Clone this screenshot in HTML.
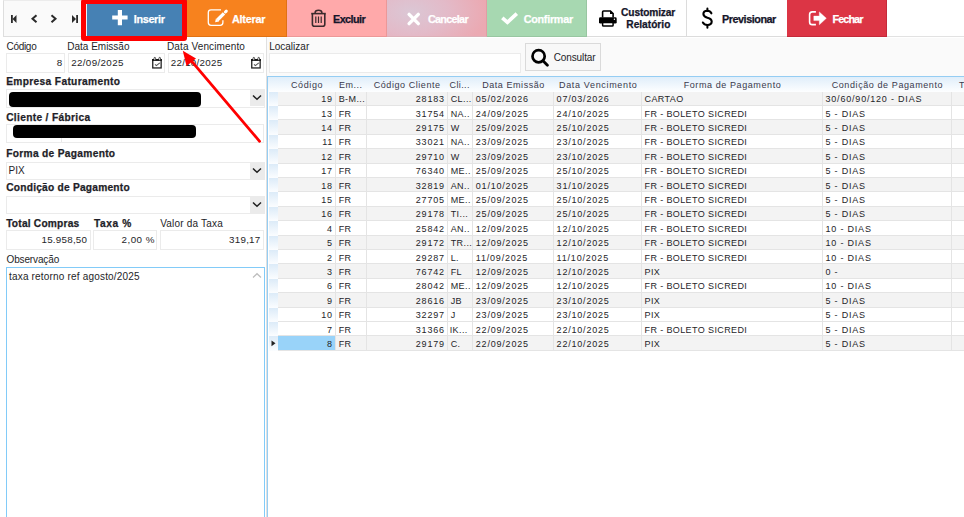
<!DOCTYPE html>
<html><head><meta charset="utf-8">
<style>
*{box-sizing:border-box;margin:0;padding:0}
html,body{width:964px;height:517px;overflow:hidden;background:#fff}
body{position:relative;font-family:"Liberation Sans",sans-serif;font-size:10px;color:#1e1e28}
.a{position:absolute}
.x{position:absolute;white-space:nowrap;line-height:20px}
.inp{position:absolute;background:#fff;border:1px solid #ebebeb}
.btn{position:absolute;top:0;height:37px}
.gl{position:absolute;background:#e4e4e4}
</style></head><body>
<div class="a" style="left:3px;top:0;width:961px;height:37px;background:#fff;border-bottom:1px solid #e2e2e2"></div>
<div class="a" style="left:3px;top:0;width:80px;height:37px;background:#fafafa;border-left:1px solid #dedede;border-bottom:1px solid #dedede;border-top:1px solid #ececec"></div>
<svg class="a" style="left:0;top:0" width="90" height="37">
 <g fill="#2a2a2a">
  <rect x="11" y="15" width="1.8" height="8"/>
  <path d="M16.5 15 L12.5 19 L16.5 23 Z"/>
  <path d="M72 15 L76 19 L72 23 Z"/>
  <rect x="76.2" y="15" width="1.8" height="8"/>
 </g>
 <g fill="none" stroke="#2a2a2a" stroke-width="2">
  <path d="M36.5 15.3 L32.5 18.8 L36.5 22.3"/>
  <path d="M51.5 15.3 L55.5 18.8 L51.5 22.3"/>
 </g>
</svg>
<div class="btn" style="left:86px;width:101px;background:#4681b4;border-left:1px solid #eaf2f8;border-right:1px solid #3d72a0;border-bottom:1px solid #3d72a0"></div>
<svg class="a" style="left:111.8px;top:10px" width="16" height="16"><path d="M5.8 0h4.2v5.6h5.6v4h-5.6v5.6h-4.2v-5.6h-5.6v-4h5.6z" fill="#fff"/></svg>
<div class="btn" style="left:187px;width:100px;background:#f7821e;border-right:1px solid #e07214;border-bottom:1px solid #e07214"></div>
<svg class="a" style="left:200px;top:5px" width="35" height="27">
 <path d="M21 4.9 H11 Q8.3 4.9 8.3 7.6 V17.6 Q8.3 20.3 11 20.3 H20.2 Q22.9 20.3 22.9 17.6 V15.2" fill="none" stroke="#fff" stroke-width="1.3"/>
 <path d="M17.4 15 L24 8.4" stroke="#fff" stroke-width="3.3"/>
 <path d="M15.1 17.2 L15.9 13.4 L19.1 16.5 Z" fill="#fff"/>
 <path d="M25.4 7 L26.3 6.1" stroke="#fff" stroke-width="3" stroke-linecap="round"/>
</svg>
<div class="btn" style="left:287px;width:100px;background:#ffa9aa;border-right:1px solid #ec9898;border-bottom:1px solid #ec9898"></div>
<svg class="a" style="left:305px;top:5px" width="30" height="27" fill="none" stroke="#3a2b2d">
 <path d="M6.2 8.6 H20.8" stroke-width="1.6"/>
 <path d="M10.1 8.4 V7.8 Q10.1 5.3 13.5 5.3 Q16.9 5.3 16.9 7.8 V8.4" stroke-width="1.5"/>
 <path d="M7.4 9 V19.3 Q7.4 21.3 9.4 21.3 H17.8 Q19.8 21.3 19.8 19.3 V9" stroke-width="1.6"/>
 <path d="M10.8 11.6 V17.9 M13.5 11.6 V17.9 M16.2 11.6 V17.9" stroke-width="1.2"/>
</svg>
<div class="btn" style="left:387px;width:100px;background:radial-gradient(ellipse 75px 45px at 24px 12px,#dbc7d5 0%,#e3bac8 50%,#eba9b2 100%) #eba9b1;border-right:1px solid #e09da4;border-bottom:1px solid #dcb0b8"></div>
<svg class="a" style="left:400px;top:5px" width="30" height="27"><path d="M9.1 9.4 L18.3 18.6 M18.3 9.4 L9.1 18.6" stroke="#fff" stroke-width="3.4" stroke-linecap="round"/></svg>
<div class="btn" style="left:487px;width:100px;background:#a7d8b1;border-right:1px solid #98c6a1;border-bottom:1px solid #98c6a1"></div>
<svg class="a" style="left:495px;top:5px" width="30" height="27"><path d="M7.3 12.8 L12.4 17.4 L21.8 8.6" fill="none" stroke="#fff" stroke-width="3.6" stroke-linejoin="miter"/></svg>
<div class="btn" style="left:587px;width:100px;background:#fff;border-right:1px solid #dcdcdc;border-bottom:1px solid #dcdcdc"></div>
<svg class="a" style="left:594px;top:5px" width="30" height="27">
 <path d="M8.6 12.6 V6.9 Q8.6 6 9.5 6 H16.4 L19.1 8.7 V12.6" fill="none" stroke="#000" stroke-width="1.6"/>
 <path d="M16 5.6 L19.5 9.1 H16 Z" fill="#000"/>
 <rect x="5" y="12.3" width="17.7" height="6.3" rx="1.4" fill="#000"/>
 <circle cx="20.4" cy="14.2" r="0.7" fill="#fff"/>
 <rect x="8.6" y="17.6" width="10.5" height="3.5" rx="0.9" fill="#fff" stroke="#000" stroke-width="1.5"/>
</svg>
<div class="btn" style="left:687px;width:100px;background:#fff;border-bottom:1px solid #dcdcdc"></div>
<svg class="a" style="left:695px;top:3px" width="30" height="29"><path d="M12.4 5.4 V8 M12.4 22 V24.8" stroke="#000" stroke-width="2" stroke-linecap="round"/><path d="M16.4 10.3 Q15.2 7.8 12.4 7.8 Q8.4 7.8 8.4 11.1 Q8.4 13.7 12.4 14.7 Q16.7 15.7 16.7 18.6 Q16.7 22 12.4 22 Q9.2 22 7.9 19.5" fill="none" stroke="#000" stroke-width="2.1" stroke-linecap="round"/></svg>
<div class="btn" style="left:787px;width:100px;background:#dc3545;border-right:1px solid #c42a3a;border-bottom:1px solid #c42a3a"></div>
<svg class="a" style="left:800px;top:5px" width="35" height="27">
 <path d="M15.9 6.9 H12.3 Q9.6 6.9 9.6 9.6 V16.9 Q9.6 19.6 12.3 19.6 H15.9" fill="none" stroke="#fff" stroke-width="1.6"/>
 <path d="M13.8 11.1 H19.3 V6.9 L26.3 13.3 L19.3 19.8 V15.6 H13.8 Z" fill="#fff" stroke="#fff" stroke-width="0.4" stroke-linejoin="round"/>
</svg>
<div class="inp" style="left:6px;top:53px;width:59px;height:20px"></div>
<div class="inp" style="left:68px;top:53px;width:97px;height:20px"></div>
<div class="inp" style="left:168px;top:53px;width:96px;height:20px"></div>
<svg class="a" style="left:150px;top:56px" width="14" height="14"><rect x="2.75" y="3.65" width="8.4" height="8.3" fill="none" stroke="#222" stroke-width="1.3"/><rect x="2.1" y="3" width="9.7" height="1.9" fill="#111"/><rect x="4" y="1.4" width="1.6" height="3" rx=".8" fill="#fff" stroke="#222" stroke-width=".8"/><rect x="8.9" y="1.4" width="1.6" height="3" rx=".8" fill="#fff" stroke="#222" stroke-width=".8"/><path d="M5 8.4 L6.4 9.6 L9.8 6.9" fill="none" stroke="#555" stroke-width="1.1"/></svg>
<svg class="a" style="left:249.3px;top:56px" width="14" height="14"><rect x="2.75" y="3.65" width="8.4" height="8.3" fill="none" stroke="#222" stroke-width="1.3"/><rect x="2.1" y="3" width="9.7" height="1.9" fill="#111"/><rect x="4" y="1.4" width="1.6" height="3" rx=".8" fill="#fff" stroke="#222" stroke-width=".8"/><rect x="8.9" y="1.4" width="1.6" height="3" rx=".8" fill="#fff" stroke="#222" stroke-width=".8"/><path d="M5 8.4 L6.4 9.6 L9.8 6.9" fill="none" stroke="#555" stroke-width="1.1"/></svg>
<div class="inp" style="left:6px;top:89px;width:259px;height:19px"></div>
<div class="a" style="left:9px;top:92px;width:192px;height:15px;background:#000;border-radius:4px"></div>
<div class="a" style="left:250px;top:90px;width:14px;height:16px;background:#ebebeb"></div><svg class="a" style="left:252px;top:94px" width="10" height="7"><path d="M1 1.5 L5 5.3 L9 1.5" fill="none" stroke="#222" stroke-width="1.5"/></svg>
<div class="inp" style="left:6px;top:124px;width:258px;height:19px"></div>
<div class="a" style="left:61px;top:125px;width:1px;height:17px;background:#e8e8e8"></div>
<div class="a" style="left:12.5px;top:125px;width:183px;height:12.5px;background:#000;border-radius:4px"></div>
<div class="inp" style="left:6px;top:162px;width:259px;height:18px"></div>
<div class="a" style="left:250px;top:163px;width:14px;height:16px;background:#ebebeb"></div><svg class="a" style="left:252px;top:167px" width="10" height="7"><path d="M1 1.5 L5 5.3 L9 1.5" fill="none" stroke="#222" stroke-width="1.5"/></svg>
<div class="inp" style="left:6px;top:195.5px;width:259px;height:18.5px"></div>
<div class="a" style="left:250px;top:197px;width:14px;height:16px;background:#ebebeb"></div><svg class="a" style="left:252px;top:201px" width="10" height="7"><path d="M1 1.5 L5 5.3 L9 1.5" fill="none" stroke="#222" stroke-width="1.5"/></svg>
<div class="inp" style="left:6px;top:230px;width:85px;height:20px"></div>
<div class="inp" style="left:93px;top:230px;width:64px;height:20px"></div>
<div class="inp" style="left:160px;top:230px;width:104px;height:20px"></div>
<div class="a" style="left:6px;top:267px;width:259px;height:260px;background:#fff;border:1px solid #82cbf8"></div>
<svg class="a" style="left:252px;top:272px" width="10" height="7"><path d="M1 5.5 L5 1.7 L9 5.5" fill="none" stroke="#bdbdbd" stroke-width="1.2"/></svg>
<div class="a" style="left:266px;top:37px;width:1px;height:480px;background:#e0e0e0"></div>
<div class="a" style="left:267px;top:38px;width:697px;height:38px;background:#fafafa"></div>
<div class="inp" style="left:269px;top:53px;width:252px;height:20px"></div>
<div class="a" style="left:525px;top:43px;width:76px;height:28px;background:#f8f8f8;border:1px solid #dadada"></div>
<svg class="a" style="left:529px;top:48px" width="21" height="19"><circle cx="9.6" cy="8.2" r="6.1" fill="none" stroke="#000" stroke-width="2.7"/><path d="M14.2 13 L18.4 17.2" stroke="#000" stroke-width="2.8" stroke-linecap="round"/></svg>
<div class="a" style="left:267px;top:76px;width:697px;height:441px;background:#fff;border-left:1px solid #95cdf3;border-top:1px solid #95cdf3"></div>
<div class="a" style="left:268px;top:77px;width:696px;height:15px;background:linear-gradient(#e0eefa,#fdfeff)"></div>
<div class="a" style="left:278px;top:92px;width:686px;height:13px;background:#f3f3f3"></div>
<div class="a" style="left:269px;top:92px;width:9px;height:14px;background:linear-gradient(#dcebf8,#fbfdff)"></div>
<div class="a" style="left:278px;top:106px;width:686px;height:13px;background:#fff"></div>
<div class="a" style="left:269px;top:106px;width:9px;height:14px;background:linear-gradient(#dcebf8,#fbfdff)"></div>
<div class="a" style="left:278px;top:120px;width:686px;height:14px;background:#f3f3f3"></div>
<div class="a" style="left:269px;top:120px;width:9px;height:15px;background:linear-gradient(#dcebf8,#fbfdff)"></div>
<div class="a" style="left:278px;top:135px;width:686px;height:13px;background:#fff"></div>
<div class="a" style="left:269px;top:135px;width:9px;height:14px;background:linear-gradient(#dcebf8,#fbfdff)"></div>
<div class="a" style="left:278px;top:149px;width:686px;height:14px;background:#f3f3f3"></div>
<div class="a" style="left:269px;top:149px;width:9px;height:15px;background:linear-gradient(#dcebf8,#fbfdff)"></div>
<div class="a" style="left:278px;top:164px;width:686px;height:13px;background:#fff"></div>
<div class="a" style="left:269px;top:164px;width:9px;height:14px;background:linear-gradient(#dcebf8,#fbfdff)"></div>
<div class="a" style="left:278px;top:178px;width:686px;height:13px;background:#f3f3f3"></div>
<div class="a" style="left:269px;top:178px;width:9px;height:14px;background:linear-gradient(#dcebf8,#fbfdff)"></div>
<div class="a" style="left:278px;top:192px;width:686px;height:14px;background:#fff"></div>
<div class="a" style="left:269px;top:192px;width:9px;height:15px;background:linear-gradient(#dcebf8,#fbfdff)"></div>
<div class="a" style="left:278px;top:207px;width:686px;height:13px;background:#f3f3f3"></div>
<div class="a" style="left:269px;top:207px;width:9px;height:14px;background:linear-gradient(#dcebf8,#fbfdff)"></div>
<div class="a" style="left:278px;top:221px;width:686px;height:14px;background:#fff"></div>
<div class="a" style="left:269px;top:221px;width:9px;height:15px;background:linear-gradient(#dcebf8,#fbfdff)"></div>
<div class="a" style="left:278px;top:236px;width:686px;height:13px;background:#f3f3f3"></div>
<div class="a" style="left:269px;top:236px;width:9px;height:14px;background:linear-gradient(#dcebf8,#fbfdff)"></div>
<div class="a" style="left:278px;top:250px;width:686px;height:13px;background:#fff"></div>
<div class="a" style="left:269px;top:250px;width:9px;height:14px;background:linear-gradient(#dcebf8,#fbfdff)"></div>
<div class="a" style="left:278px;top:264px;width:686px;height:14px;background:#f3f3f3"></div>
<div class="a" style="left:269px;top:264px;width:9px;height:15px;background:linear-gradient(#dcebf8,#fbfdff)"></div>
<div class="a" style="left:278px;top:279px;width:686px;height:13px;background:#fff"></div>
<div class="a" style="left:269px;top:279px;width:9px;height:14px;background:linear-gradient(#dcebf8,#fbfdff)"></div>
<div class="a" style="left:278px;top:293px;width:686px;height:14px;background:#f3f3f3"></div>
<div class="a" style="left:269px;top:293px;width:9px;height:15px;background:linear-gradient(#dcebf8,#fbfdff)"></div>
<div class="a" style="left:278px;top:308px;width:686px;height:13px;background:#fff"></div>
<div class="a" style="left:269px;top:308px;width:9px;height:14px;background:linear-gradient(#dcebf8,#fbfdff)"></div>
<div class="a" style="left:278px;top:322px;width:686px;height:13px;background:#fff"></div>
<div class="a" style="left:269px;top:322px;width:9px;height:14px;background:linear-gradient(#dcebf8,#fbfdff)"></div>
<div class="a" style="left:278px;top:336px;width:686px;height:14px;background:#f3f3f3"></div>
<div class="a" style="left:269px;top:336px;width:9px;height:15px;background:linear-gradient(#dcebf8,#fbfdff)"></div>
<div class="gl" style="left:278px;top:105px;width:686px;height:1px"></div>
<div class="gl" style="left:278px;top:119px;width:686px;height:1px"></div>
<div class="gl" style="left:278px;top:134px;width:686px;height:1px"></div>
<div class="gl" style="left:278px;top:148px;width:686px;height:1px"></div>
<div class="gl" style="left:278px;top:163px;width:686px;height:1px"></div>
<div class="gl" style="left:278px;top:177px;width:686px;height:1px"></div>
<div class="gl" style="left:278px;top:191px;width:686px;height:1px"></div>
<div class="gl" style="left:278px;top:206px;width:686px;height:1px"></div>
<div class="gl" style="left:278px;top:220px;width:686px;height:1px"></div>
<div class="gl" style="left:278px;top:235px;width:686px;height:1px"></div>
<div class="gl" style="left:278px;top:249px;width:686px;height:1px"></div>
<div class="gl" style="left:278px;top:263px;width:686px;height:1px"></div>
<div class="gl" style="left:278px;top:278px;width:686px;height:1px"></div>
<div class="gl" style="left:278px;top:292px;width:686px;height:1px"></div>
<div class="gl" style="left:278px;top:307px;width:686px;height:1px"></div>
<div class="gl" style="left:278px;top:321px;width:686px;height:1px"></div>
<div class="gl" style="left:278px;top:335px;width:686px;height:1px"></div>
<div class="gl" style="left:278px;top:350px;width:686px;height:1px"></div>
<div class="gl" style="left:335px;top:92px;width:1px;height:258px"></div>
<div class="gl" style="left:366px;top:92px;width:1px;height:258px"></div>
<div class="gl" style="left:447px;top:92px;width:1px;height:258px"></div>
<div class="gl" style="left:472px;top:92px;width:1px;height:258px"></div>
<div class="gl" style="left:553px;top:92px;width:1px;height:258px"></div>
<div class="gl" style="left:641px;top:92px;width:1px;height:258px"></div>
<div class="gl" style="left:822px;top:92px;width:1px;height:258px"></div>
<div class="gl" style="left:951px;top:92px;width:1px;height:258px"></div>
<div class="a" style="left:278px;top:336px;width:57px;height:14px;background:#99d3f9"></div>
<svg class="a" style="left:271px;top:339.5px" width="5" height="7"><path d="M0.5 0.5 L4.5 3.3 L0.5 6.2Z" fill="#222"/></svg>
<div class="x" style="left:133.70px;top:8.90px;font-size:10.8px;letter-spacing:-0.300px;font-weight:bold;-webkit-text-stroke:.25px #fff;color:#fff">Inserir</div>
<div class="x" style="left:232.00px;top:8.90px;font-size:10.8px;letter-spacing:-0.233px;font-weight:bold;-webkit-text-stroke:.25px #fff;color:#fff">Alterar</div>
<div class="x" style="left:333.00px;top:8.90px;font-size:10.8px;letter-spacing:-0.567px;font-weight:bold;-webkit-text-stroke:.25px #15152a;color:#15152a">Excluir</div>
<div class="x" style="left:428.00px;top:8.90px;font-size:10.8px;letter-spacing:-0.714px;font-weight:bold;-webkit-text-stroke:.25px #fff;color:#fff">Cancelar</div>
<div class="x" style="left:523.70px;top:8.90px;font-size:10.8px;letter-spacing:-0.275px;font-weight:bold;-webkit-text-stroke:.25px #fff;color:#fff">Confirmar</div>
<div class="x" style="left:621.10px;top:2.60px;font-size:10.2px;letter-spacing:-0.144px;font-weight:bold;-webkit-text-stroke:.25px #15152a;color:#15152a">Customizar</div>
<div class="x" style="left:626.30px;top:15.40px;font-size:10.2px;letter-spacing:-0.012px;font-weight:bold;-webkit-text-stroke:.25px #15152a;color:#15152a">Relatório</div>
<div class="x" style="left:722.00px;top:8.90px;font-size:10.8px;letter-spacing:-0.450px;font-weight:bold;-webkit-text-stroke:.25px #15152a;color:#15152a">Previsionar</div>
<div class="x" style="left:832.50px;top:8.90px;font-size:10.8px;letter-spacing:-0.900px;font-weight:bold;-webkit-text-stroke:.25px #fff;color:#fff">Fechar</div>
<div class="x" style="left:6.50px;top:36.80px;font-size:10px;letter-spacing:-0.300px;color:#1e1e28">Código</div>
<div class="x" style="left:67.30px;top:36.80px;font-size:10px;letter-spacing:-0.009px;color:#1e1e28">Data Emissão</div>
<div class="x" style="left:167.00px;top:36.80px;font-size:10px;letter-spacing:0.121px;color:#1e1e28">Data Vencimento</div>
<div class="x" style="left:56.70px;top:52.80px;font-size:9.8px;letter-spacing:0.400px;color:#1e1e28">8</div>
<div class="x" style="left:71.20px;top:52.80px;font-size:9.8px;letter-spacing:0.356px;color:#1e1e28">22/09/2025</div>
<div class="x" style="left:170.70px;top:52.80px;font-size:9.8px;letter-spacing:0.278px;color:#1e1e28">22/10/2025</div>
<div class="x" style="left:6.20px;top:71.70px;font-size:10.2px;letter-spacing:0.344px;font-weight:bold;-webkit-text-stroke:.25px #1e1e28;color:#1e1e28">Empresa Faturamento</div>
<div class="x" style="left:6.20px;top:108.00px;font-size:10.2px;letter-spacing:0.325px;font-weight:bold;-webkit-text-stroke:.25px #1e1e28;color:#1e1e28">Cliente / Fábrica</div>
<div class="x" style="left:6.20px;top:143.70px;font-size:10.2px;letter-spacing:0.312px;font-weight:bold;-webkit-text-stroke:.25px #1e1e28;color:#1e1e28">Forma de Pagamento</div>
<div class="x" style="left:8.60px;top:161.00px;font-size:10px;letter-spacing:-0.050px;color:#1e1e28">PIX</div>
<div class="x" style="left:6.20px;top:177.80px;font-size:10.2px;letter-spacing:0.230px;font-weight:bold;-webkit-text-stroke:.25px #1e1e28;color:#1e1e28">Condição de Pagamento</div>
<div class="x" style="left:6.20px;top:213.70px;font-size:10.2px;letter-spacing:0.208px;font-weight:bold;-webkit-text-stroke:.25px #1e1e28;color:#1e1e28">Total Compras</div>
<div class="x" style="left:94.00px;top:213.70px;font-size:10.2px;letter-spacing:0.600px;font-weight:bold;-webkit-text-stroke:.25px #1e1e28;color:#1e1e28">Taxa %</div>
<div class="x" style="left:160.20px;top:213.70px;font-size:10px;letter-spacing:0.200px;color:#1e1e28">Valor da Taxa</div>
<div class="x" style="left:41.50px;top:230.00px;font-size:9.8px;letter-spacing:0.238px;color:#1e1e28">15.958,50</div>
<div class="x" style="left:121.50px;top:230.00px;font-size:9.8px;letter-spacing:0.500px;color:#1e1e28">2,00 %</div>
<div class="x" style="left:229.00px;top:230.00px;font-size:9.8px;letter-spacing:0.260px;color:#1e1e28">319,17</div>
<div class="x" style="left:6.50px;top:250.00px;font-size:10px;letter-spacing:-0.133px;color:#1e1e28">Observação</div>
<div class="x" style="left:9.00px;top:266.60px;font-size:10px;letter-spacing:0.185px;color:#1e1e28">taxa retorno ref agosto/2025</div>
<div class="x" style="left:269.20px;top:37.00px;font-size:10px;letter-spacing:0.000px;color:#1e1e28">Localizar</div>
<div class="x" style="left:553.70px;top:47.90px;font-size:10px;letter-spacing:-0.113px;color:#1e1e28">Consultar</div>
<div class="x" style="left:291.00px;top:74.60px;font-size:9px;letter-spacing:0.600px;color:#3a3a4c">Código</div>
<div class="x" style="left:339.00px;top:74.60px;font-size:9px;letter-spacing:0.500px;color:#3a3a4c">Em...</div>
<div class="x" style="left:373.70px;top:74.60px;font-size:9px;letter-spacing:0.562px;color:#3a3a4c">Código Cliente</div>
<div class="x" style="left:449.50px;top:74.60px;font-size:9px;letter-spacing:0.400px;color:#3a3a4c">Cli...</div>
<div class="x" style="left:482.20px;top:74.60px;font-size:9px;letter-spacing:0.555px;color:#3a3a4c">Data Emissão</div>
<div class="x" style="left:559.00px;top:74.60px;font-size:9px;letter-spacing:0.664px;color:#3a3a4c">Data Vencimento</div>
<div class="x" style="left:683.70px;top:74.60px;font-size:9px;letter-spacing:0.588px;color:#3a3a4c">Forma de Pagamento</div>
<div class="x" style="left:831.70px;top:74.60px;font-size:9px;letter-spacing:0.590px;color:#3a3a4c">Condição de Pagamento</div>
<div class="x" style="left:959.00px;top:74.60px;font-size:9px;letter-spacing:0.400px;color:#3a3a4c">T</div>
<div class="x" style="left:321.20px;top:89.30px;font-size:9px;letter-spacing:0.800px;color:#1e1e28">19</div>
<div class="x" style="left:338.70px;top:89.30px;font-size:9px;letter-spacing:0.400px;color:#1e1e28">B-M...</div>
<div class="x" style="left:415.80px;top:89.30px;font-size:9px;letter-spacing:0.800px;color:#1e1e28">28183</div>
<div class="x" style="left:450.70px;top:89.30px;font-size:9px;letter-spacing:0.400px;color:#1e1e28">CL...</div>
<div class="x" style="left:475.80px;top:89.30px;font-size:9px;letter-spacing:0.800px;color:#1e1e28">05/02/2026</div>
<div class="x" style="left:556.60px;top:89.30px;font-size:9px;letter-spacing:0.800px;color:#1e1e28">07/03/2026</div>
<div class="x" style="left:644.50px;top:89.30px;font-size:9px;letter-spacing:0.400px;color:#1e1e28">CARTAO</div>
<div class="x" style="left:825.50px;top:89.30px;font-size:9px;letter-spacing:0.800px;color:#1e1e28">30/60/90/120 - DIAS</div>
<div class="x" style="left:321.20px;top:103.69px;font-size:9px;letter-spacing:0.800px;color:#1e1e28">13</div>
<div class="x" style="left:338.70px;top:103.69px;font-size:9px;letter-spacing:0.400px;color:#1e1e28">FR</div>
<div class="x" style="left:415.80px;top:103.69px;font-size:9px;letter-spacing:0.800px;color:#1e1e28">31754</div>
<div class="x" style="left:450.70px;top:103.69px;font-size:9px;letter-spacing:0.400px;color:#1e1e28">NA..</div>
<div class="x" style="left:475.80px;top:103.69px;font-size:9px;letter-spacing:0.800px;color:#1e1e28">24/09/2025</div>
<div class="x" style="left:556.60px;top:103.69px;font-size:9px;letter-spacing:0.800px;color:#1e1e28">24/10/2025</div>
<div class="x" style="left:644.50px;top:103.69px;font-size:9px;letter-spacing:0.390px;color:#1e1e28">FR - BOLETO SICREDI</div>
<div class="x" style="left:825.50px;top:103.69px;font-size:9px;letter-spacing:0.800px;color:#1e1e28">5 - DIAS</div>
<div class="x" style="left:321.20px;top:118.08px;font-size:9px;letter-spacing:0.800px;color:#1e1e28">14</div>
<div class="x" style="left:338.70px;top:118.08px;font-size:9px;letter-spacing:0.400px;color:#1e1e28">FR</div>
<div class="x" style="left:415.80px;top:118.08px;font-size:9px;letter-spacing:0.800px;color:#1e1e28">29175</div>
<div class="x" style="left:450.70px;top:118.08px;font-size:9px;letter-spacing:0.400px;color:#1e1e28">W</div>
<div class="x" style="left:475.80px;top:118.08px;font-size:9px;letter-spacing:0.800px;color:#1e1e28">25/09/2025</div>
<div class="x" style="left:556.60px;top:118.08px;font-size:9px;letter-spacing:0.800px;color:#1e1e28">25/10/2025</div>
<div class="x" style="left:644.50px;top:118.08px;font-size:9px;letter-spacing:0.390px;color:#1e1e28">FR - BOLETO SICREDI</div>
<div class="x" style="left:825.50px;top:118.08px;font-size:9px;letter-spacing:0.800px;color:#1e1e28">5 - DIAS</div>
<div class="x" style="left:322.20px;top:132.47px;font-size:9px;letter-spacing:0.800px;color:#1e1e28">11</div>
<div class="x" style="left:338.70px;top:132.47px;font-size:9px;letter-spacing:0.400px;color:#1e1e28">FR</div>
<div class="x" style="left:415.80px;top:132.47px;font-size:9px;letter-spacing:0.800px;color:#1e1e28">33021</div>
<div class="x" style="left:450.70px;top:132.47px;font-size:9px;letter-spacing:0.400px;color:#1e1e28">NA..</div>
<div class="x" style="left:475.80px;top:132.47px;font-size:9px;letter-spacing:0.800px;color:#1e1e28">23/09/2025</div>
<div class="x" style="left:556.60px;top:132.47px;font-size:9px;letter-spacing:0.800px;color:#1e1e28">23/10/2025</div>
<div class="x" style="left:644.50px;top:132.47px;font-size:9px;letter-spacing:0.390px;color:#1e1e28">FR - BOLETO SICREDI</div>
<div class="x" style="left:825.50px;top:132.47px;font-size:9px;letter-spacing:0.800px;color:#1e1e28">5 - DIAS</div>
<div class="x" style="left:321.20px;top:146.86px;font-size:9px;letter-spacing:0.800px;color:#1e1e28">12</div>
<div class="x" style="left:338.70px;top:146.86px;font-size:9px;letter-spacing:0.400px;color:#1e1e28">FR</div>
<div class="x" style="left:415.80px;top:146.86px;font-size:9px;letter-spacing:0.800px;color:#1e1e28">29710</div>
<div class="x" style="left:450.70px;top:146.86px;font-size:9px;letter-spacing:0.400px;color:#1e1e28">W</div>
<div class="x" style="left:475.80px;top:146.86px;font-size:9px;letter-spacing:0.800px;color:#1e1e28">23/09/2025</div>
<div class="x" style="left:556.60px;top:146.86px;font-size:9px;letter-spacing:0.800px;color:#1e1e28">23/10/2025</div>
<div class="x" style="left:644.50px;top:146.86px;font-size:9px;letter-spacing:0.390px;color:#1e1e28">FR - BOLETO SICREDI</div>
<div class="x" style="left:825.50px;top:146.86px;font-size:9px;letter-spacing:0.800px;color:#1e1e28">5 - DIAS</div>
<div class="x" style="left:321.20px;top:161.25px;font-size:9px;letter-spacing:0.800px;color:#1e1e28">17</div>
<div class="x" style="left:338.70px;top:161.25px;font-size:9px;letter-spacing:0.400px;color:#1e1e28">FR</div>
<div class="x" style="left:415.80px;top:161.25px;font-size:9px;letter-spacing:0.800px;color:#1e1e28">76340</div>
<div class="x" style="left:450.70px;top:161.25px;font-size:9px;letter-spacing:0.400px;color:#1e1e28">ME..</div>
<div class="x" style="left:475.80px;top:161.25px;font-size:9px;letter-spacing:0.800px;color:#1e1e28">25/09/2025</div>
<div class="x" style="left:556.60px;top:161.25px;font-size:9px;letter-spacing:0.800px;color:#1e1e28">25/10/2025</div>
<div class="x" style="left:644.50px;top:161.25px;font-size:9px;letter-spacing:0.390px;color:#1e1e28">FR - BOLETO SICREDI</div>
<div class="x" style="left:825.50px;top:161.25px;font-size:9px;letter-spacing:0.800px;color:#1e1e28">5 - DIAS</div>
<div class="x" style="left:321.20px;top:175.64px;font-size:9px;letter-spacing:0.800px;color:#1e1e28">18</div>
<div class="x" style="left:338.70px;top:175.64px;font-size:9px;letter-spacing:0.400px;color:#1e1e28">FR</div>
<div class="x" style="left:415.80px;top:175.64px;font-size:9px;letter-spacing:0.800px;color:#1e1e28">32819</div>
<div class="x" style="left:450.70px;top:175.64px;font-size:9px;letter-spacing:0.400px;color:#1e1e28">AN..</div>
<div class="x" style="left:475.80px;top:175.64px;font-size:9px;letter-spacing:0.800px;color:#1e1e28">01/10/2025</div>
<div class="x" style="left:556.60px;top:175.64px;font-size:9px;letter-spacing:0.800px;color:#1e1e28">31/10/2025</div>
<div class="x" style="left:644.50px;top:175.64px;font-size:9px;letter-spacing:0.390px;color:#1e1e28">FR - BOLETO SICREDI</div>
<div class="x" style="left:825.50px;top:175.64px;font-size:9px;letter-spacing:0.800px;color:#1e1e28">5 - DIAS</div>
<div class="x" style="left:321.20px;top:190.03px;font-size:9px;letter-spacing:0.800px;color:#1e1e28">15</div>
<div class="x" style="left:338.70px;top:190.03px;font-size:9px;letter-spacing:0.400px;color:#1e1e28">FR</div>
<div class="x" style="left:415.80px;top:190.03px;font-size:9px;letter-spacing:0.800px;color:#1e1e28">27705</div>
<div class="x" style="left:450.70px;top:190.03px;font-size:9px;letter-spacing:0.400px;color:#1e1e28">ME..</div>
<div class="x" style="left:475.80px;top:190.03px;font-size:9px;letter-spacing:0.800px;color:#1e1e28">25/09/2025</div>
<div class="x" style="left:556.60px;top:190.03px;font-size:9px;letter-spacing:0.800px;color:#1e1e28">25/10/2025</div>
<div class="x" style="left:644.50px;top:190.03px;font-size:9px;letter-spacing:0.390px;color:#1e1e28">FR - BOLETO SICREDI</div>
<div class="x" style="left:825.50px;top:190.03px;font-size:9px;letter-spacing:0.800px;color:#1e1e28">5 - DIAS</div>
<div class="x" style="left:321.20px;top:204.42px;font-size:9px;letter-spacing:0.800px;color:#1e1e28">16</div>
<div class="x" style="left:338.70px;top:204.42px;font-size:9px;letter-spacing:0.400px;color:#1e1e28">FR</div>
<div class="x" style="left:415.80px;top:204.42px;font-size:9px;letter-spacing:0.800px;color:#1e1e28">29178</div>
<div class="x" style="left:450.70px;top:204.42px;font-size:9px;letter-spacing:0.400px;color:#1e1e28">TI...</div>
<div class="x" style="left:475.80px;top:204.42px;font-size:9px;letter-spacing:0.800px;color:#1e1e28">25/09/2025</div>
<div class="x" style="left:556.60px;top:204.42px;font-size:9px;letter-spacing:0.800px;color:#1e1e28">25/10/2025</div>
<div class="x" style="left:644.50px;top:204.42px;font-size:9px;letter-spacing:0.390px;color:#1e1e28">FR - BOLETO SICREDI</div>
<div class="x" style="left:825.50px;top:204.42px;font-size:9px;letter-spacing:0.800px;color:#1e1e28">5 - DIAS</div>
<div class="x" style="left:327.00px;top:218.81px;font-size:9px;letter-spacing:0.800px;color:#1e1e28">4</div>
<div class="x" style="left:338.70px;top:218.81px;font-size:9px;letter-spacing:0.400px;color:#1e1e28">FR</div>
<div class="x" style="left:415.80px;top:218.81px;font-size:9px;letter-spacing:0.800px;color:#1e1e28">25842</div>
<div class="x" style="left:450.70px;top:218.81px;font-size:9px;letter-spacing:0.400px;color:#1e1e28">AN..</div>
<div class="x" style="left:475.80px;top:218.81px;font-size:9px;letter-spacing:0.800px;color:#1e1e28">12/09/2025</div>
<div class="x" style="left:556.60px;top:218.81px;font-size:9px;letter-spacing:0.800px;color:#1e1e28">12/10/2025</div>
<div class="x" style="left:644.50px;top:218.81px;font-size:9px;letter-spacing:0.390px;color:#1e1e28">FR - BOLETO SICREDI</div>
<div class="x" style="left:825.50px;top:218.81px;font-size:9px;letter-spacing:0.800px;color:#1e1e28">10 - DIAS</div>
<div class="x" style="left:327.00px;top:233.20px;font-size:9px;letter-spacing:0.800px;color:#1e1e28">5</div>
<div class="x" style="left:338.70px;top:233.20px;font-size:9px;letter-spacing:0.400px;color:#1e1e28">FR</div>
<div class="x" style="left:415.80px;top:233.20px;font-size:9px;letter-spacing:0.800px;color:#1e1e28">29172</div>
<div class="x" style="left:450.70px;top:233.20px;font-size:9px;letter-spacing:0.400px;color:#1e1e28">TR...</div>
<div class="x" style="left:475.80px;top:233.20px;font-size:9px;letter-spacing:0.800px;color:#1e1e28">12/09/2025</div>
<div class="x" style="left:556.60px;top:233.20px;font-size:9px;letter-spacing:0.800px;color:#1e1e28">12/10/2025</div>
<div class="x" style="left:644.50px;top:233.20px;font-size:9px;letter-spacing:0.390px;color:#1e1e28">FR - BOLETO SICREDI</div>
<div class="x" style="left:825.50px;top:233.20px;font-size:9px;letter-spacing:0.800px;color:#1e1e28">10 - DIAS</div>
<div class="x" style="left:327.00px;top:247.59px;font-size:9px;letter-spacing:0.800px;color:#1e1e28">2</div>
<div class="x" style="left:338.70px;top:247.59px;font-size:9px;letter-spacing:0.400px;color:#1e1e28">FR</div>
<div class="x" style="left:415.80px;top:247.59px;font-size:9px;letter-spacing:0.800px;color:#1e1e28">29287</div>
<div class="x" style="left:450.70px;top:247.59px;font-size:9px;letter-spacing:0.400px;color:#1e1e28">L.</div>
<div class="x" style="left:475.80px;top:247.59px;font-size:9px;letter-spacing:0.800px;color:#1e1e28">11/09/2025</div>
<div class="x" style="left:556.60px;top:247.59px;font-size:9px;letter-spacing:0.800px;color:#1e1e28">11/10/2025</div>
<div class="x" style="left:644.50px;top:247.59px;font-size:9px;letter-spacing:0.390px;color:#1e1e28">FR - BOLETO SICREDI</div>
<div class="x" style="left:825.50px;top:247.59px;font-size:9px;letter-spacing:0.800px;color:#1e1e28">10 - DIAS</div>
<div class="x" style="left:327.00px;top:261.98px;font-size:9px;letter-spacing:0.800px;color:#1e1e28">3</div>
<div class="x" style="left:338.70px;top:261.98px;font-size:9px;letter-spacing:0.400px;color:#1e1e28">FR</div>
<div class="x" style="left:415.80px;top:261.98px;font-size:9px;letter-spacing:0.800px;color:#1e1e28">76742</div>
<div class="x" style="left:450.70px;top:261.98px;font-size:9px;letter-spacing:0.400px;color:#1e1e28">FL</div>
<div class="x" style="left:475.80px;top:261.98px;font-size:9px;letter-spacing:0.800px;color:#1e1e28">12/09/2025</div>
<div class="x" style="left:556.60px;top:261.98px;font-size:9px;letter-spacing:0.800px;color:#1e1e28">12/10/2025</div>
<div class="x" style="left:644.50px;top:261.98px;font-size:9px;letter-spacing:0.400px;color:#1e1e28">PIX</div>
<div class="x" style="left:825.50px;top:261.98px;font-size:9px;letter-spacing:0.800px;color:#1e1e28">0 -</div>
<div class="x" style="left:327.00px;top:276.37px;font-size:9px;letter-spacing:0.800px;color:#1e1e28">6</div>
<div class="x" style="left:338.70px;top:276.37px;font-size:9px;letter-spacing:0.400px;color:#1e1e28">FR</div>
<div class="x" style="left:415.80px;top:276.37px;font-size:9px;letter-spacing:0.800px;color:#1e1e28">28042</div>
<div class="x" style="left:450.70px;top:276.37px;font-size:9px;letter-spacing:0.400px;color:#1e1e28">ME..</div>
<div class="x" style="left:475.80px;top:276.37px;font-size:9px;letter-spacing:0.800px;color:#1e1e28">12/09/2025</div>
<div class="x" style="left:556.60px;top:276.37px;font-size:9px;letter-spacing:0.800px;color:#1e1e28">12/10/2025</div>
<div class="x" style="left:644.50px;top:276.37px;font-size:9px;letter-spacing:0.390px;color:#1e1e28">FR - BOLETO SICREDI</div>
<div class="x" style="left:825.50px;top:276.37px;font-size:9px;letter-spacing:0.800px;color:#1e1e28">10 - DIAS</div>
<div class="x" style="left:327.00px;top:290.76px;font-size:9px;letter-spacing:0.800px;color:#1e1e28">9</div>
<div class="x" style="left:338.70px;top:290.76px;font-size:9px;letter-spacing:0.400px;color:#1e1e28">FR</div>
<div class="x" style="left:415.80px;top:290.76px;font-size:9px;letter-spacing:0.800px;color:#1e1e28">28616</div>
<div class="x" style="left:450.70px;top:290.76px;font-size:9px;letter-spacing:0.400px;color:#1e1e28">JB</div>
<div class="x" style="left:475.80px;top:290.76px;font-size:9px;letter-spacing:0.800px;color:#1e1e28">23/09/2025</div>
<div class="x" style="left:556.60px;top:290.76px;font-size:9px;letter-spacing:0.800px;color:#1e1e28">23/10/2025</div>
<div class="x" style="left:644.50px;top:290.76px;font-size:9px;letter-spacing:0.400px;color:#1e1e28">PIX</div>
<div class="x" style="left:825.50px;top:290.76px;font-size:9px;letter-spacing:0.800px;color:#1e1e28">5 - DIAS</div>
<div class="x" style="left:321.20px;top:305.15px;font-size:9px;letter-spacing:0.800px;color:#1e1e28">10</div>
<div class="x" style="left:338.70px;top:305.15px;font-size:9px;letter-spacing:0.400px;color:#1e1e28">FR</div>
<div class="x" style="left:415.80px;top:305.15px;font-size:9px;letter-spacing:0.800px;color:#1e1e28">32297</div>
<div class="x" style="left:450.70px;top:305.15px;font-size:9px;letter-spacing:0.400px;color:#1e1e28">J</div>
<div class="x" style="left:475.80px;top:305.15px;font-size:9px;letter-spacing:0.800px;color:#1e1e28">23/09/2025</div>
<div class="x" style="left:556.60px;top:305.15px;font-size:9px;letter-spacing:0.800px;color:#1e1e28">23/10/2025</div>
<div class="x" style="left:644.50px;top:305.15px;font-size:9px;letter-spacing:0.400px;color:#1e1e28">PIX</div>
<div class="x" style="left:825.50px;top:305.15px;font-size:9px;letter-spacing:0.800px;color:#1e1e28">5 - DIAS</div>
<div class="x" style="left:327.00px;top:319.54px;font-size:9px;letter-spacing:0.800px;color:#1e1e28">7</div>
<div class="x" style="left:338.70px;top:319.54px;font-size:9px;letter-spacing:0.400px;color:#1e1e28">FR</div>
<div class="x" style="left:415.80px;top:319.54px;font-size:9px;letter-spacing:0.800px;color:#1e1e28">31366</div>
<div class="x" style="left:449.70px;top:319.54px;font-size:9px;letter-spacing:0.400px;color:#1e1e28">IK...</div>
<div class="x" style="left:475.80px;top:319.54px;font-size:9px;letter-spacing:0.800px;color:#1e1e28">22/09/2025</div>
<div class="x" style="left:556.60px;top:319.54px;font-size:9px;letter-spacing:0.800px;color:#1e1e28">22/10/2025</div>
<div class="x" style="left:644.50px;top:319.54px;font-size:9px;letter-spacing:0.390px;color:#1e1e28">FR - BOLETO SICREDI</div>
<div class="x" style="left:825.50px;top:319.54px;font-size:9px;letter-spacing:0.800px;color:#1e1e28">5 - DIAS</div>
<div class="x" style="left:327.00px;top:333.93px;font-size:9px;letter-spacing:0.800px;color:#1e1e28">8</div>
<div class="x" style="left:338.70px;top:333.93px;font-size:9px;letter-spacing:0.400px;color:#1e1e28">FR</div>
<div class="x" style="left:415.80px;top:333.93px;font-size:9px;letter-spacing:0.800px;color:#1e1e28">29179</div>
<div class="x" style="left:450.70px;top:333.93px;font-size:9px;letter-spacing:0.400px;color:#1e1e28">C.</div>
<div class="x" style="left:475.80px;top:333.93px;font-size:9px;letter-spacing:0.800px;color:#1e1e28">22/09/2025</div>
<div class="x" style="left:556.60px;top:333.93px;font-size:9px;letter-spacing:0.800px;color:#1e1e28">22/10/2025</div>
<div class="x" style="left:644.50px;top:333.93px;font-size:9px;letter-spacing:0.400px;color:#1e1e28">PIX</div>
<div class="x" style="left:825.50px;top:333.93px;font-size:9px;letter-spacing:0.800px;color:#1e1e28">5 - DIAS</div>
<div class="a" style="left:81px;top:-1px;width:106px;height:41.5px;border:5px solid #ff0000;border-radius:3px"></div>
<svg class="a" style="left:0;top:0" width="964" height="517">
 <path d="M259.6 141.3 L189 58.2" stroke="#ff0000" stroke-width="2.8" stroke-linecap="round" fill="none"/>
 <path d="M182.8 50.8 L196 58.5 L186.5 66 Z" fill="#ff0000"/>
</svg>
</body></html>
